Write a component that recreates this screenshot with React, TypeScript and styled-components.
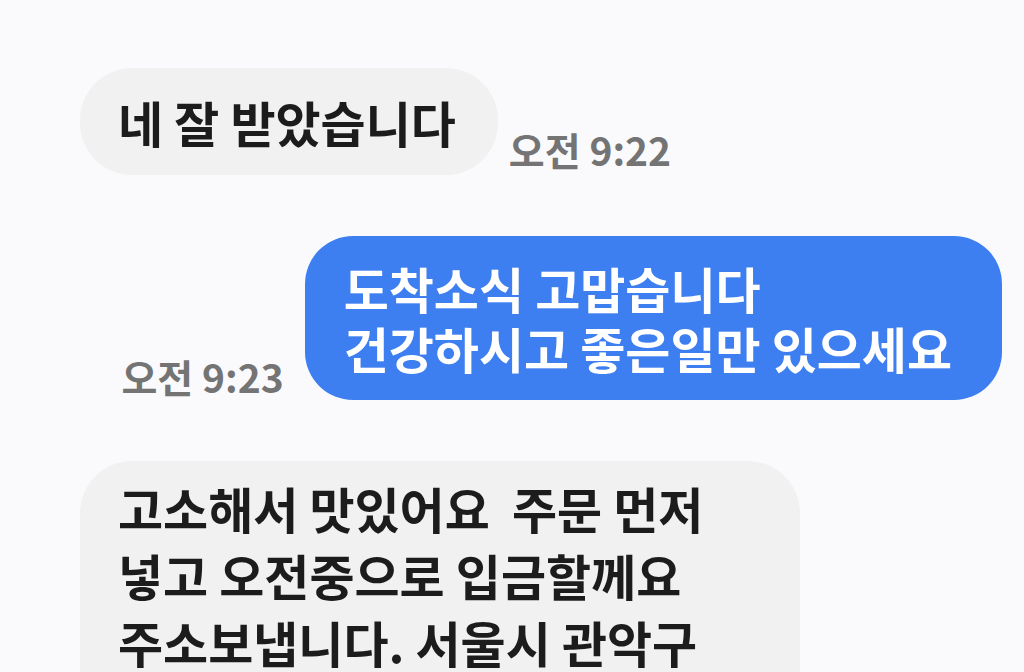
import React from 'react'
import styled, { createGlobalStyle } from 'styled-components'

const GlobalStyle = createGlobalStyle`
  html, body {
    margin: 0;
    padding: 0;
    background: #fafafc;
    overflow: hidden;
  }
  body {
    font-family: 'Noto Sans CJK KR', 'Noto Sans', sans-serif;
  }
`

const Thread = styled.div`
  display: flex;
  flex-direction: column;
  gap: 61px;
  padding: 68px 22px 0 80px;
  height: 672px;
  box-sizing: border-box;
`

const Row = styled.div<{ $mine?: boolean }>`
  display: flex;
  align-items: flex-end;
  justify-content: ${({ $mine }) => ($mine ? 'flex-end' : 'flex-start')};
  gap: ${({ $mine }) => ($mine ? '21px' : '11px')};
`

const Bubble = styled.div<{ $width?: string; $padTop?: number }>`
  box-sizing: border-box;
  width: ${({ $width }) => $width || 'auto'};
  padding: ${({ $padTop }) => $padTop ?? 20}px 42px 20px 38px;
  border-radius: 52px;
  background: #f1f1f2;
  color: #1c1c1c;
  font-size: 49px;
  font-weight: 700;
  line-height: 67px;
  white-space: pre;
`

const MyBubble = styled(Bubble)`
  padding: 22px 50px 22px 39px;
  border-radius: 48px;
  background: #3d7ef0;
  color: #ffffff;
  font-size: 49px;
  line-height: 60px;
`

const Time = styled.span<{ $lift?: number }>`
  color: #747474;
  font-size: 39px;
  font-weight: 700;
  line-height: 40px;
  margin-bottom: ${({ $lift }) => $lift ?? 6}px;
  white-space: nowrap;
`

export default function App() {
  return (
    <>
      <GlobalStyle />
      <Thread>
        <Row>
          <Bubble>네 잘 받았습니다</Bubble>
          <Time>오전 9:22</Time>
        </Row>
        <Row $mine>
          <Time $lift={4}>오전 9:23</Time>
          <MyBubble>
            도착소식 고맙습니다
            <br />
            건강하시고 좋은일만 있으세요
          </MyBubble>
        </Row>
        <Row>
          <Bubble $width="720px" $padTop={13}>
            고소해서 맛있어요  주문 먼저
            <br />
            넣고 오전중으로 입금할께요
            <br />
            주소보냅니다. 서울시 관악구
            <br />
            {' '}
          </Bubble>
        </Row>
      </Thread>
    </>
  )
}
